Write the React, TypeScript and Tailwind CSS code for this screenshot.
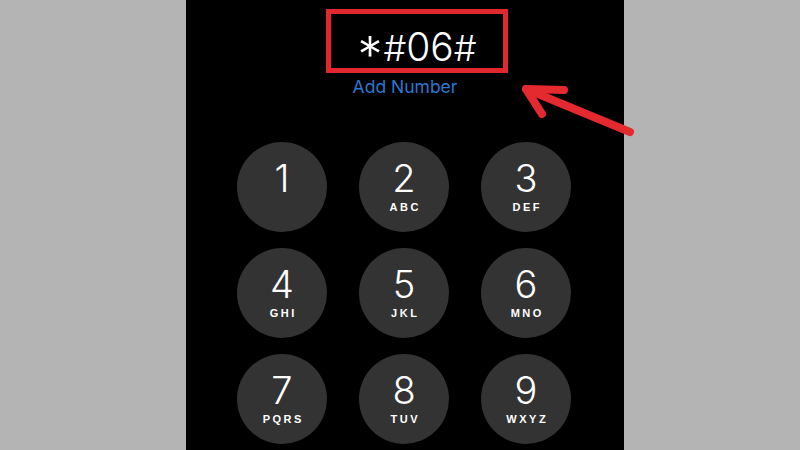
import React from "react";

const keys: [string, string][] = [
  ["1", ""],
  ["2", "ABC"],
  ["3", "DEF"],
  ["4", "GHI"],
  ["5", "JKL"],
  ["6", "MNO"],
  ["7", "PQRS"],
  ["8", "TUV"],
  ["9", "WXYZ"],
];

export default function App() {
  return (
    <div className="relative w-[800px] h-[450px] bg-[#b4b4b4] overflow-hidden" style={{ fontFamily: "Inter, 'Liberation Sans', sans-serif" }}>
      <div className="ml-[186px] w-[438px] h-[450px] bg-black flex flex-col">
        <div className="mt-[9px] ml-[140px] w-[182px] h-[64px] border-[5px] border-[#e0282e] flex items-center justify-center">
          <div className="flex items-baseline text-white font-light leading-none mt-[4px]">
            <span className="text-[50px] relative top-[12px] mr-[1px]">*</span>
            <span className="text-[36px]">#</span>
            <span className="text-[39px]">06</span>
            <span className="text-[36px]">#</span>
          </div>
        </div>
        <div className="mt-[3px] text-center text-[#2a78d4] text-[17.5px] leading-[22px]">Add Number</div>
        <div className="mt-[44px] ml-[51px] grid grid-cols-[90px_90px_90px] gap-x-[32px] gap-y-[16px]">
          {keys.map(([d, l]) => (
            <div key={d} className="w-[90px] h-[90px] rounded-full bg-[#333333] flex flex-col items-center pt-[17px]" style={{ fontFamily: "'Liberation Sans', Arial, sans-serif" }}>
              <span className="text-white text-[38px] leading-[38px]" style={{ fontFamily: "Inter, sans-serif", fontWeight: 300 }}>{d}</span>
              {l && (
                <span className="text-white text-[11px] font-bold tracking-[2.5px] leading-[12px] mt-[4px] pl-[2.5px]">{l}</span>
              )}
            </div>
          ))}
        </div>
      </div>
      <svg className="absolute left-0 top-0" width="800" height="450" viewBox="0 0 800 450">
        <g stroke="#e52a2f" strokeWidth="8" strokeLinecap="round" strokeLinejoin="round" fill="none">
          <line x1="526" y1="89" x2="630" y2="132" />
          <polyline points="564,90 526,89 542,114" />
        </g>
      </svg>
    </div>
  );
}
